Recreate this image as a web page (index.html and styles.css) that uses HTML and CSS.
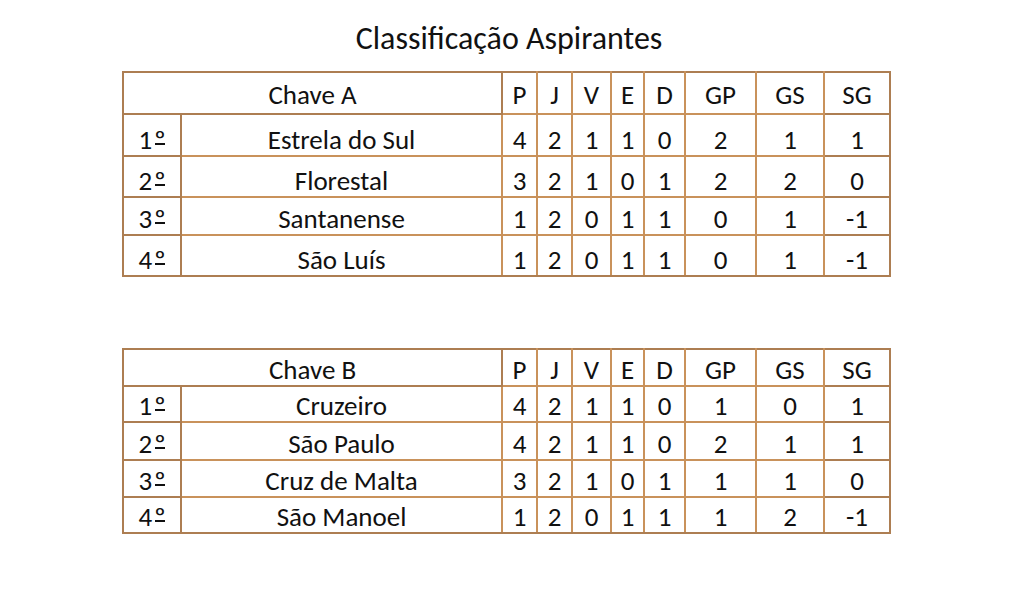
FILE: index.html
```html
<!DOCTYPE html>
<html lang="pt">
<head>
<meta charset="utf-8">
<title>Classificação Aspirantes</title>
<link rel="stylesheet" href="styles.css">
</head>
<body>
<div class="page">
  <h1 class="title">Classificação Aspirantes</h1>
  <table class="standings first">
    <colgroup>
      <col class="c-rank"><col class="c-name"><col class="c-p"><col class="c-j"><col class="c-v"><col class="c-e"><col class="c-d"><col class="c-gp"><col class="c-gs"><col class="c-sg">
    </colgroup>
    <tr class="head"><td colspan="2">Chave A</td><td>P</td><td>J</td><td>V</td><td>E</td><td>D</td><td>GP</td><td>GS</td><td>SG</td></tr>
    <tr class="r1"><td>1<span class="ord">º</span></td><td>Estrela do Sul</td><td>4</td><td>2</td><td>1</td><td>1</td><td>0</td><td>2</td><td>1</td><td>1</td></tr>
    <tr class="r2"><td>2<span class="ord">º</span></td><td>Florestal</td><td>3</td><td>2</td><td>1</td><td>0</td><td>1</td><td>2</td><td>2</td><td>0</td></tr>
    <tr class="r3"><td>3<span class="ord">º</span></td><td>Santanense</td><td>1</td><td>2</td><td>0</td><td>1</td><td>1</td><td>0</td><td>1</td><td>-1</td></tr>
    <tr class="r4"><td>4<span class="ord">º</span></td><td>São Luís</td><td>1</td><td>2</td><td>0</td><td>1</td><td>1</td><td>0</td><td>1</td><td>-1</td></tr>
  </table>
  <table class="standings second">
    <colgroup>
      <col class="c-rank"><col class="c-name"><col class="c-p"><col class="c-j"><col class="c-v"><col class="c-e"><col class="c-d"><col class="c-gp"><col class="c-gs"><col class="c-sg">
    </colgroup>
    <tr class="head"><td colspan="2">Chave B</td><td>P</td><td>J</td><td>V</td><td>E</td><td>D</td><td>GP</td><td>GS</td><td>SG</td></tr>
    <tr class="r1"><td>1<span class="ord">º</span></td><td>Cruzeiro</td><td>4</td><td>2</td><td>1</td><td>1</td><td>0</td><td>1</td><td>0</td><td>1</td></tr>
    <tr class="r2"><td>2<span class="ord">º</span></td><td>São Paulo</td><td>4</td><td>2</td><td>1</td><td>1</td><td>0</td><td>2</td><td>1</td><td>1</td></tr>
    <tr class="r3"><td>3<span class="ord">º</span></td><td>Cruz de Malta</td><td>3</td><td>2</td><td>1</td><td>0</td><td>1</td><td>1</td><td>1</td><td>0</td></tr>
    <tr class="r4"><td>4<span class="ord">º</span></td><td>São Manoel</td><td>1</td><td>2</td><td>0</td><td>1</td><td>1</td><td>1</td><td>2</td><td>-1</td></tr>
  </table>
</div>
</body>
</html>
```
FILE: styles.css
```css
html, body {
  margin: 0;
  padding: 0;
  background: #ffffff;
}
body {
  font-family: Carlito, Lato, "Open Sans", sans-serif;
  color: #111111;
}
.page {
  width: 1024px;
  height: 615px;
  display: flex;
  flex-direction: column;
  align-items: flex-start;
  padding-left: 122px;
  box-sizing: border-box;
}
.title {
  margin: 0;
  padding-top: 21px;
  width: 770px;
  text-align: center;
  font-weight: normal;
  font-size: 32px;
  line-height: 36px;
  padding-left: 2px;
}
.standings {
  border-collapse: collapse;
  table-layout: fixed;
  width: 769px;
  border: 2px solid #ad7e52;
  font-size: 27px;
}
.standings td {
  border: 2px solid #c9925b;
  text-align: center;
  vertical-align: bottom;
  padding: 0 0 2px 0;
  line-height: 27px;
  white-space: nowrap;
}
.standings tr > td:first-child,
.standings tr > td:last-child { border-color: #ad7e52; }
.standings tr:first-child > td { border-top-color: #ad7e52; }
.standings tr:last-child > td { border-bottom-color: #ad7e52; }
.ord {
  position: relative;
  display: inline-block;
  padding-left: 2px;
}
.ord::after {
  content: "";
  position: absolute;
  left: 3px;
  right: 1px;
  bottom: 0.3em;
  height: 2px;
  background: currentColor;
}
.first { margin-top: 14px; }
.second { margin-top: 71px; }
.first .head { height: 42px; }
.first .r1 { height: 42px; }
.first .r2 { height: 41px; }
.first .r3 { height: 38px; }
.first .r4 { height: 41px; }
.standings .head td { padding-bottom: 5px; }
.second .head { height: 37px; }
.second .r1 { height: 36px; }
.second .r2 { height: 38px; }
.second .r3 { height: 37px; }
.second .r4 { height: 36px; }
.second .head td { padding-bottom: 2px; }
.c-rank { width: 58px; }
.c-name { width: 321px; }
.c-p { width: 35px; }
.c-j { width: 35px; }
.c-v { width: 39px; }
.c-e { width: 33px; }
.c-d { width: 41px; }
.c-gp { width: 71px; }
.c-gs { width: 68px; }
.c-sg { width: 66px; }
```
